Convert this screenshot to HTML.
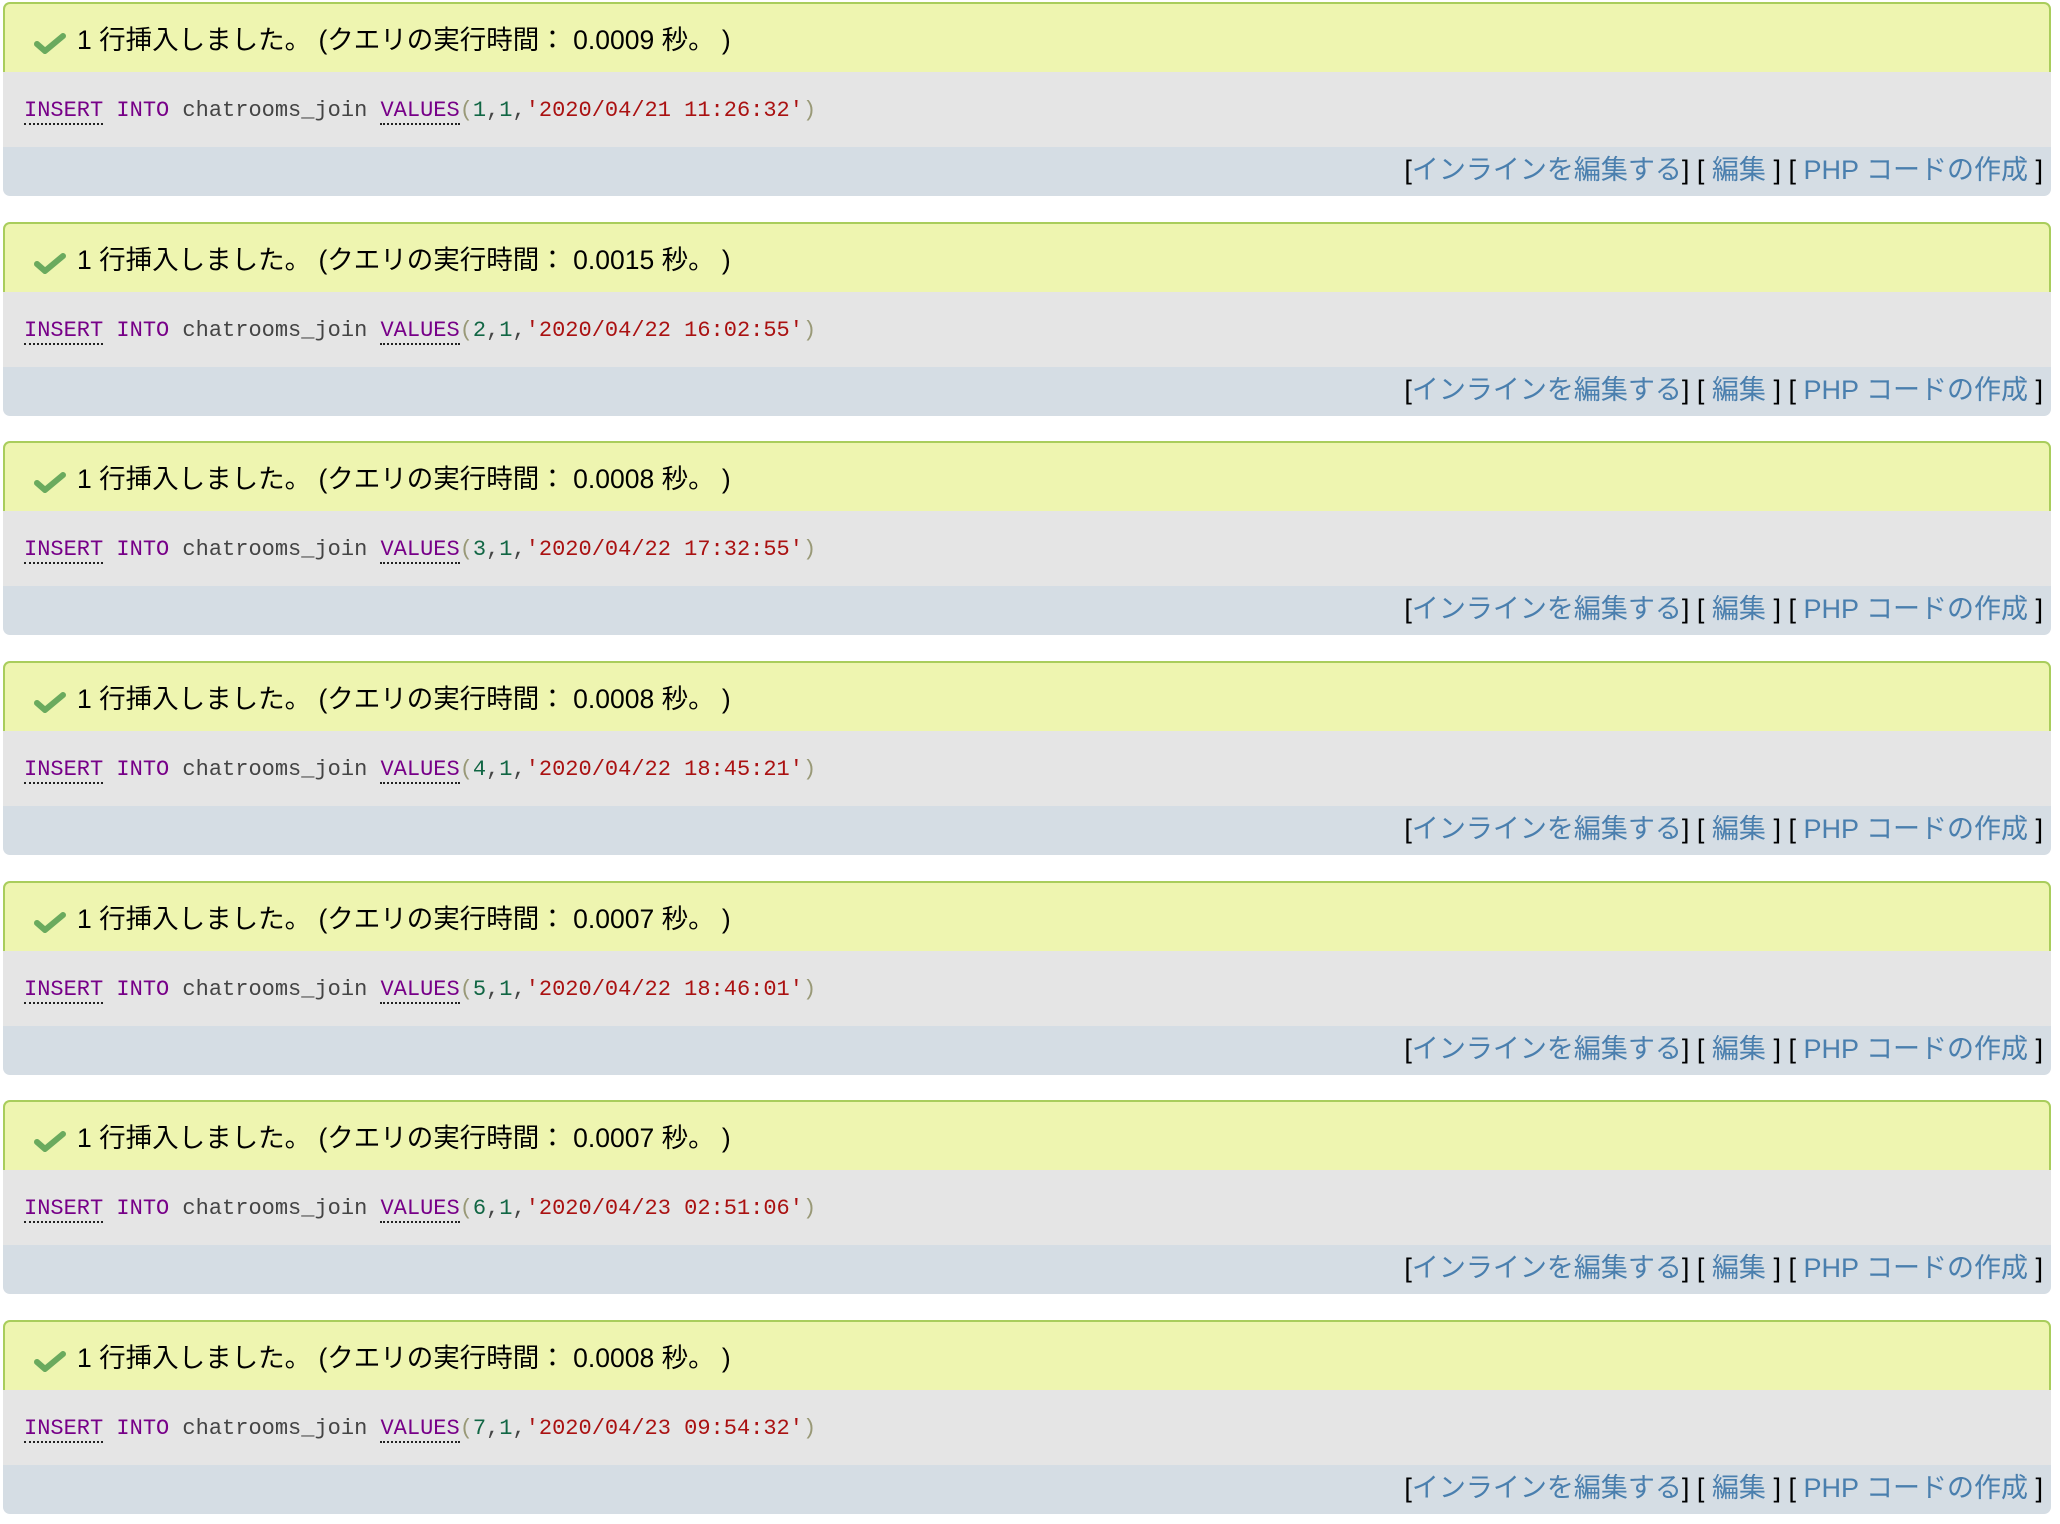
<!DOCTYPE html>
<html><head><meta charset="utf-8">
<style>
html,body{margin:0;padding:0;background:#fff;width:2060px;height:1524px;overflow:hidden}
.blk{position:absolute;left:3px;width:2048px;height:194px}
.hd{position:absolute;left:0;top:0;width:2044px;height:68px;background:#eef5b0;border:2px solid #a9cd5c;border-bottom:none;border-radius:7px 7px 0 0}
.hd .t{position:absolute;left:72px;top:21px;font:26.5px "Liberation Sans","Noto Sans CJK JP",sans-serif;color:#000;white-space:nowrap;line-height:30px}
.hd svg{position:absolute;left:29px;top:28px}
.sq{position:absolute;left:0;top:70px;width:2048px;height:75px;background:#e5e5e5}
.sq .c{position:absolute;left:21px;top:26px;font:22px/26px "Liberation Mono",monospace;color:#444;white-space:nowrap}
.kw{color:#770088}.u{border-bottom:2px dotted #222}
.n{color:#116644}.s{color:#aa1111}.p{color:#999977}
.ft{position:absolute;left:0;top:145px;width:2048px;height:49px;background:#d5dde4;border-radius:0 0 7px 7px}
.ft .l{position:absolute;right:8px;top:8px;font:27px/30px "Liberation Sans","Noto Sans CJK JP",sans-serif;color:#000;white-space:nowrap}
.ft a{color:#4a7fae;text-decoration:none}
</style></head><body>
<div class="blk" style="top:2px"><div class="hd"><svg width="32" height="22" viewBox="0 0 32 22"><path d="M3 12 L11 19 L29 4" fill="none" stroke="#6aaa5e" stroke-width="6" stroke-linecap="round" stroke-linejoin="round"/></svg><div class="t">1 行挿入しました。 (クエリの実行時間： 0.0009 秒。 )</div></div><div class="sq"><div class="c"><span class="kw u">INSERT</span> <span class="kw">INTO</span> chatrooms_join <span class="kw u">VALUES</span><span class="p">(</span><span class="n">1</span>,<span class="n">1</span>,<span class="s">'2020/04/21 11:26:32'</span><span class="p">)</span></div></div><div class="ft"><div class="l">[<a>インラインを編集する</a>] [ <a>編集</a> ] [ <a>PHP コードの作成</a> ]</div></div></div>
<div class="blk" style="top:222px"><div class="hd"><svg width="32" height="22" viewBox="0 0 32 22"><path d="M3 12 L11 19 L29 4" fill="none" stroke="#6aaa5e" stroke-width="6" stroke-linecap="round" stroke-linejoin="round"/></svg><div class="t">1 行挿入しました。 (クエリの実行時間： 0.0015 秒。 )</div></div><div class="sq"><div class="c"><span class="kw u">INSERT</span> <span class="kw">INTO</span> chatrooms_join <span class="kw u">VALUES</span><span class="p">(</span><span class="n">2</span>,<span class="n">1</span>,<span class="s">'2020/04/22 16:02:55'</span><span class="p">)</span></div></div><div class="ft"><div class="l">[<a>インラインを編集する</a>] [ <a>編集</a> ] [ <a>PHP コードの作成</a> ]</div></div></div>
<div class="blk" style="top:441px"><div class="hd"><svg width="32" height="22" viewBox="0 0 32 22"><path d="M3 12 L11 19 L29 4" fill="none" stroke="#6aaa5e" stroke-width="6" stroke-linecap="round" stroke-linejoin="round"/></svg><div class="t">1 行挿入しました。 (クエリの実行時間： 0.0008 秒。 )</div></div><div class="sq"><div class="c"><span class="kw u">INSERT</span> <span class="kw">INTO</span> chatrooms_join <span class="kw u">VALUES</span><span class="p">(</span><span class="n">3</span>,<span class="n">1</span>,<span class="s">'2020/04/22 17:32:55'</span><span class="p">)</span></div></div><div class="ft"><div class="l">[<a>インラインを編集する</a>] [ <a>編集</a> ] [ <a>PHP コードの作成</a> ]</div></div></div>
<div class="blk" style="top:661px"><div class="hd"><svg width="32" height="22" viewBox="0 0 32 22"><path d="M3 12 L11 19 L29 4" fill="none" stroke="#6aaa5e" stroke-width="6" stroke-linecap="round" stroke-linejoin="round"/></svg><div class="t">1 行挿入しました。 (クエリの実行時間： 0.0008 秒。 )</div></div><div class="sq"><div class="c"><span class="kw u">INSERT</span> <span class="kw">INTO</span> chatrooms_join <span class="kw u">VALUES</span><span class="p">(</span><span class="n">4</span>,<span class="n">1</span>,<span class="s">'2020/04/22 18:45:21'</span><span class="p">)</span></div></div><div class="ft"><div class="l">[<a>インラインを編集する</a>] [ <a>編集</a> ] [ <a>PHP コードの作成</a> ]</div></div></div>
<div class="blk" style="top:881px"><div class="hd"><svg width="32" height="22" viewBox="0 0 32 22"><path d="M3 12 L11 19 L29 4" fill="none" stroke="#6aaa5e" stroke-width="6" stroke-linecap="round" stroke-linejoin="round"/></svg><div class="t">1 行挿入しました。 (クエリの実行時間： 0.0007 秒。 )</div></div><div class="sq"><div class="c"><span class="kw u">INSERT</span> <span class="kw">INTO</span> chatrooms_join <span class="kw u">VALUES</span><span class="p">(</span><span class="n">5</span>,<span class="n">1</span>,<span class="s">'2020/04/22 18:46:01'</span><span class="p">)</span></div></div><div class="ft"><div class="l">[<a>インラインを編集する</a>] [ <a>編集</a> ] [ <a>PHP コードの作成</a> ]</div></div></div>
<div class="blk" style="top:1100px"><div class="hd"><svg width="32" height="22" viewBox="0 0 32 22"><path d="M3 12 L11 19 L29 4" fill="none" stroke="#6aaa5e" stroke-width="6" stroke-linecap="round" stroke-linejoin="round"/></svg><div class="t">1 行挿入しました。 (クエリの実行時間： 0.0007 秒。 )</div></div><div class="sq"><div class="c"><span class="kw u">INSERT</span> <span class="kw">INTO</span> chatrooms_join <span class="kw u">VALUES</span><span class="p">(</span><span class="n">6</span>,<span class="n">1</span>,<span class="s">'2020/04/23 02:51:06'</span><span class="p">)</span></div></div><div class="ft"><div class="l">[<a>インラインを編集する</a>] [ <a>編集</a> ] [ <a>PHP コードの作成</a> ]</div></div></div>
<div class="blk" style="top:1320px"><div class="hd"><svg width="32" height="22" viewBox="0 0 32 22"><path d="M3 12 L11 19 L29 4" fill="none" stroke="#6aaa5e" stroke-width="6" stroke-linecap="round" stroke-linejoin="round"/></svg><div class="t">1 行挿入しました。 (クエリの実行時間： 0.0008 秒。 )</div></div><div class="sq"><div class="c"><span class="kw u">INSERT</span> <span class="kw">INTO</span> chatrooms_join <span class="kw u">VALUES</span><span class="p">(</span><span class="n">7</span>,<span class="n">1</span>,<span class="s">'2020/04/23 09:54:32'</span><span class="p">)</span></div></div><div class="ft"><div class="l">[<a>インラインを編集する</a>] [ <a>編集</a> ] [ <a>PHP コードの作成</a> ]</div></div></div>
</body></html>
